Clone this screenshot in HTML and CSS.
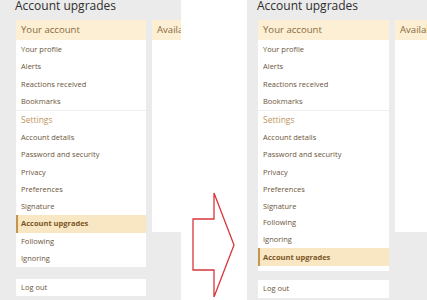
FILE: index.html
```html
<!DOCTYPE html>
<html lang="en">
<head>
    <meta charset="UTF-8">
    <meta name="viewport" content="width=device-width, initial-scale=1.0">
    <title>Account upgrades - before and after</title>
    <link rel="stylesheet" href="styles.css">
</head>
<body>
    <div class="compare">
        <!-- Before -->
        <div class="shot shot-before">
            <h1 class="page-title">Account upgrades</h1>
            <div class="page-body">
                <div class="side">
                    <div class="block">
                        <h2 class="block-header">Your account</h2>
                        <a href="#" class="item">Your profile</a>
                        <a href="#" class="item">Alerts</a>
                        <a href="#" class="item">Reactions received</a>
                        <a href="#" class="item">Bookmarks</a>
                        <h3 class="block-minor">Settings</h3>
                        <a href="#" class="item">Account details</a>
                        <a href="#" class="item">Password and security</a>
                        <a href="#" class="item">Privacy</a>
                        <a href="#" class="item">Preferences</a>
                        <a href="#" class="item">Signature</a>
                        <a href="#" class="item active">Account upgrades</a>
                        <a href="#" class="item">Following</a>
                        <a href="#" class="item">Ignoring</a>
                    </div>
                    <div class="block block-logout">
                        <a href="#" class="item">Log out</a>
                    </div>
                </div>
                <div class="main">
                    <div class="block main-block">
                        <h2 class="block-header">Available upgrades</h2>
                    </div>
                </div>
            </div>
        </div>

        <!-- Arrow -->
        <div class="gutter">
            <svg class="arrow" width="66" height="300" viewBox="0 0 66 300">
                <polygon points="12,219 33,219 33,193 53,245 33,297 33,270 12,270" fill="none" stroke="#d8363c" stroke-width="1.3"/>
            </svg>
        </div>

        <!-- After -->
        <div class="shot shot-after">
            <h1 class="page-title">Account upgrades</h1>
            <div class="page-body">
                <div class="side side-wide">
                    <div class="block block-after">
                        <h2 class="block-header">Your account</h2>
                        <a href="#" class="item">Your profile</a>
                        <a href="#" class="item">Alerts</a>
                        <a href="#" class="item">Reactions received</a>
                        <a href="#" class="item">Bookmarks</a>
                        <h3 class="block-minor">Settings</h3>
                        <a href="#" class="item">Account details</a>
                        <a href="#" class="item">Password and security</a>
                        <a href="#" class="item">Privacy</a>
                        <a href="#" class="item">Preferences</a>
                        <a href="#" class="item">Signature</a>
                        <a href="#" class="item squeezed">Following</a>
                        <a href="#" class="item">Ignoring</a>
                        <a href="#" class="item active">Account upgrades</a>
                    </div>
                    <div class="block block-logout">
                        <a href="#" class="item">Log out</a>
                    </div>
                </div>
                <div class="main">
                    <div class="block main-block">
                        <h2 class="block-header">Available upgrades</h2>
                    </div>
                </div>
            </div>
        </div>
    </div>
</body>
</html>
```

FILE: styles.css
```css
body {
    margin: 0;
    font-family: "Open Sans", "Noto Sans", sans-serif;
    background: #fff;
    color: #333;
}
.compare {
    display: flex;
    height: 300px;
    overflow: hidden;
}
.shot {
    background: #ebebeb;
    overflow: hidden;
    flex-shrink: 0;
}
.shot-before {
    width: 181px;
    padding-left: 16px;
    box-sizing: border-box;
}
.shot-after {
    width: 180px;
    padding-left: 11px;
    box-sizing: border-box;
}
.gutter {
    width: 66px;
    flex-shrink: 0;
}
.arrow {
    display: block;
}
.page-title {
    margin: 0 0 8px -1px;
    line-height: 12px;
    font-size: 12px;
    font-weight: normal;
    color: #2e2e2e;
    white-space: nowrap;
}
.page-body {
    display: flex;
    gap: 6px;
}
.side {
    width: 130px;
    flex-shrink: 0;
}
.side-wide {
    width: 131px;
}
.main {
    width: 200px;
    flex-shrink: 0;
}
.block {
    background: #fff;
    display: flex;
    flex-direction: column;
}
.block-header {
    margin: 0 0 1px;
    height: 20px;
    line-height: 20px;
    padding-left: 5px;
    background: #fcefd3;
    color: #8a6a40;
    font-size: 9.6px;
    font-weight: normal;
    white-space: nowrap;
}
.block-minor {
    margin: 0;
    height: 18px;
    line-height: 18px;
    padding-left: 5px;
    border-top: 1px solid #efefef;
    color: #bd9560;
    font-size: 8.5px;
    font-weight: normal;
}
.item {
    display: block;
    height: 17.25px;
    line-height: 17px;
    padding-left: 5px;
    color: #6b5439;
    font-size: 7.5px;
    text-decoration: none;
    white-space: nowrap;
}
.item.active {
    background: #f8e7c2;
    border-left: 2px solid #c3954f;
    padding-left: 3px;
    font-weight: bold;
    color: #7a5428;
}
.item.squeezed {
    margin-top: -1.5px;
}
.block-after {
    padding-bottom: 5px;
}
.block-after .item.active {
    height: 18px;
    line-height: 18px;
}
.block-logout {
    margin-top: 12px;
}
.block-after + .block-logout {
    margin-top: 9px;
}
.main-block {
    height: 212px;
}
```
